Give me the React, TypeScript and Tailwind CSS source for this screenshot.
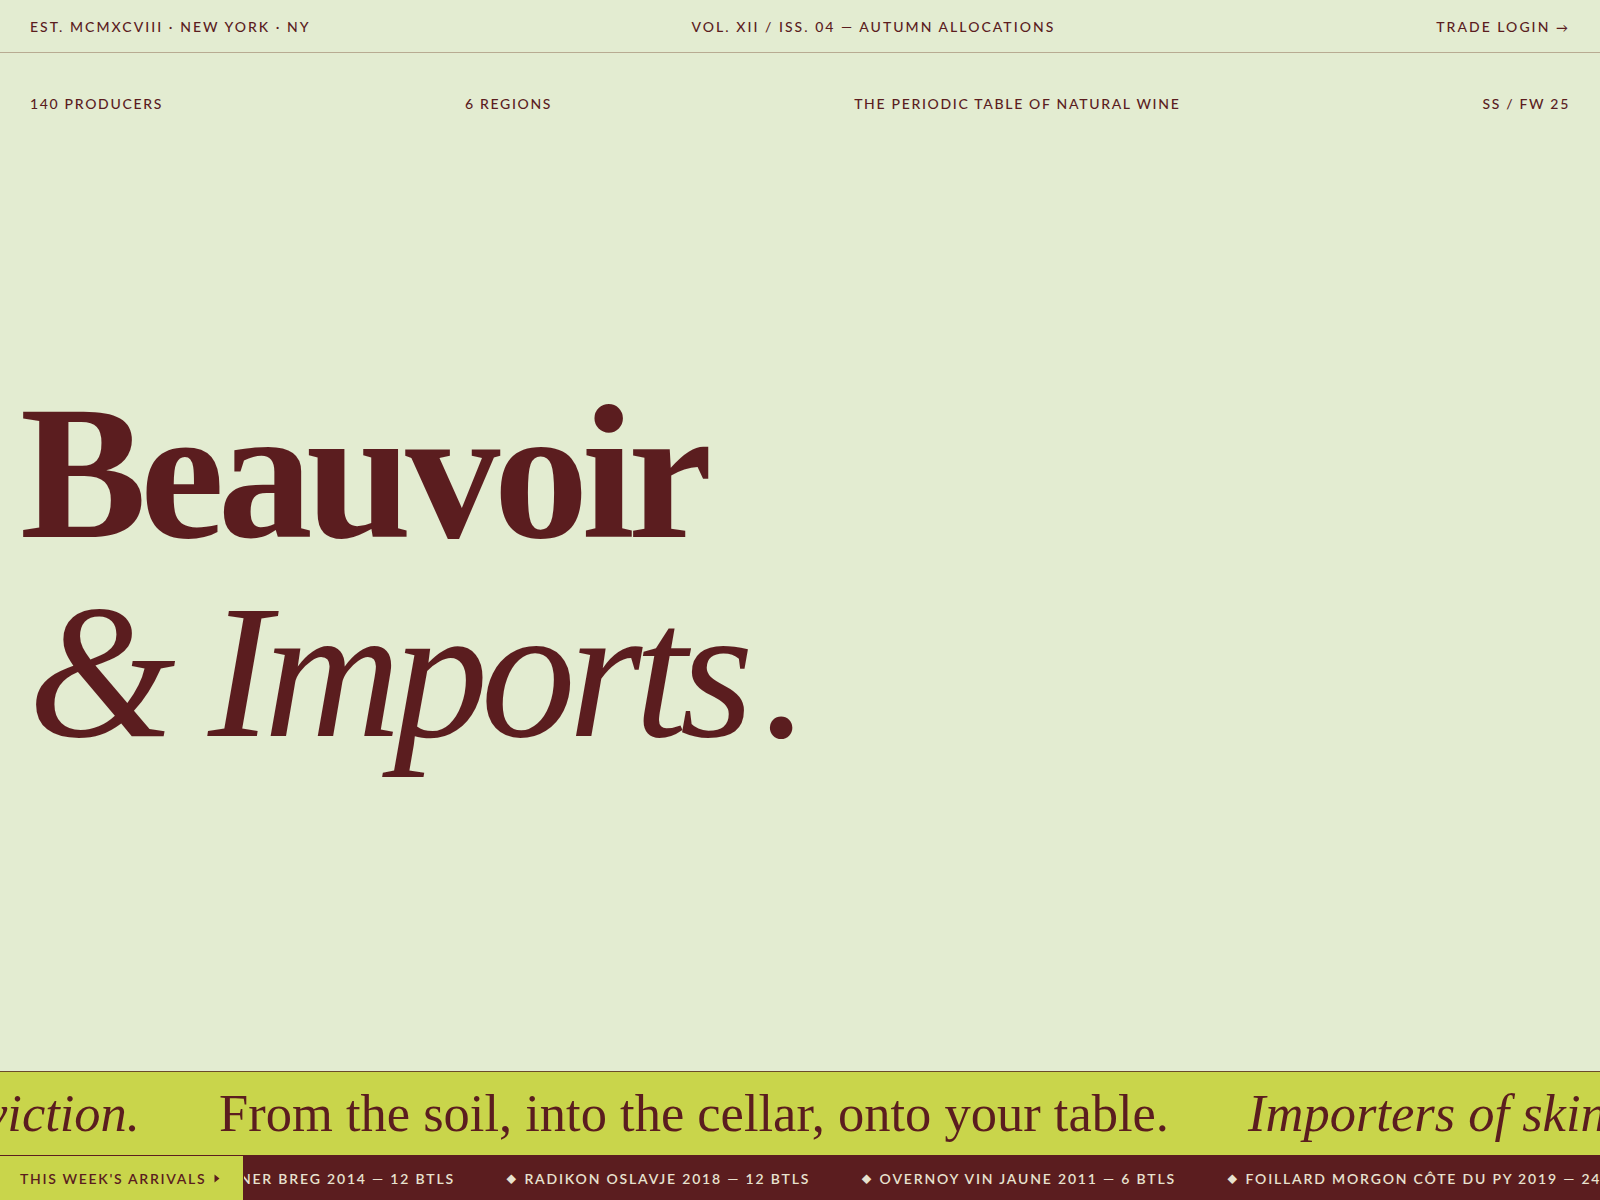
import React from "react";

const sans = "font-['Lato','Inter',sans-serif]";
const serif = "font-['Liberation_Serif','Times_New_Roman',serif]";

const arrivals = [
  "OVERNOY VIN JAUNE 2011 — 6 BTLS",
  "FOILLARD MORGON CÔTE DU PY 2019 — 24 BTLS",
  "GRAVNER BREG 2014 — 12 BTLS",
];

export default function App() {
  return (
    <div className={`h-[1200px] w-full overflow-hidden bg-[#e3ecd1] text-[#5b1d1f] flex flex-col ${sans}`}>
      {/* top bar */}
      <header className="h-[53px] shrink-0 border-b border-[#b8ab92] px-[30px] flex items-center justify-between text-[14px] font-medium tracking-[0.145em] uppercase">
        <span>EST. MCMXCVIII · NEW YORK · NY</span>
        <span>VOL. XII / ISS. 04 — AUTUMN ALLOCATIONS</span>
        <span>TRADE LOGIN <span className="text-[12px]">→</span></span>
      </header>

      {/* meta row */}
      <div className="shrink-0 pt-[41px] px-[30px] flex items-center justify-between text-[14px] leading-[20px] font-medium tracking-[0.12em] uppercase">
        <span>140 PRODUCERS</span>
        <span>6 REGIONS</span>
        <span>THE PERIODIC TABLE OF NATURAL WINE</span>
        <span>SS / FW 25</span>
      </div>

      {/* hero */}
      <main className="flex-1 flex flex-col justify-center pl-[20px] pb-[40px]">
        <h1 className={`${serif} text-[190px] leading-[207px] text-[#5b1d1f]`}>
          <span className="block font-bold tracking-[-0.035em]">Beauvoir</span>
          <span className="block italic font-normal tracking-[-0.04em] pl-[8px] -mt-[8px]">
            &amp; Imports<span className="ml-[16px]">.</span>
          </span>
        </h1>
      </main>

      {/* marquee band */}
      <div className="h-[85px] shrink-0 bg-[#c9d54b] border-t border-[#6b4a2a] border-b border-b-[#5b1d1f] overflow-hidden flex items-center">
        <div className={`${serif} text-[52.5px] leading-none whitespace-nowrap flex items-center gap-[79px]`}>
          <div className="w-[140px] shrink-0 flex justify-end">
            <span className="italic">Importers of skin-contact &amp; conviction.</span>
          </div>
          <span className="shrink-0">From the soil, into the cellar, onto your table.</span>
          <span className="italic shrink-0">Importers of skin-contact &amp; conviction.</span>
        </div>
      </div>

      {/* arrivals ticker */}
      <div className="h-[44px] shrink-0 bg-[#5b1d1f] flex items-stretch overflow-hidden">
        <div className="w-[244px] shrink-0 bg-[#c9d54b] border-r border-[#5b1d1f] flex items-center pl-[20px] gap-[8px] text-[14px] font-semibold tracking-[0.12em] uppercase text-[#5b1d1f]">
          <span>THIS WEEK'S ARRIVALS</span>
          <svg width="6" height="9" viewBox="0 0 6 9" className="mt-[1px]">
            <path d="M0.5 0.5 L5.5 4.5 L0.5 8.5 Z" fill="#5b1d1f" />
          </svg>
        </div>
        <div className="flex-1 min-w-0 overflow-hidden flex items-center whitespace-nowrap text-[14px] font-semibold tracking-[0.13em] uppercase text-[#e8e2cf]">
          <div className="w-[211px] shrink-0 flex justify-end overflow-hidden">
            <span className="shrink-0">◆ GRAVNER BREG 2014 — 12 BTLS</span>
          </div>
          <span className="shrink-0 pl-[51px]"><span className="text-[10px] mr-[6px] align-[1px]">◆</span>RADIKON OSLAVJE 2018 — 12 BTLS</span>
          {arrivals.map((a) => (
            <span key={a} className="shrink-0 pl-[51px]"><span className="text-[10px] mr-[6px] align-[1px]">◆</span>{a}</span>
          ))}
        </div>
      </div>
    </div>
  );
}
